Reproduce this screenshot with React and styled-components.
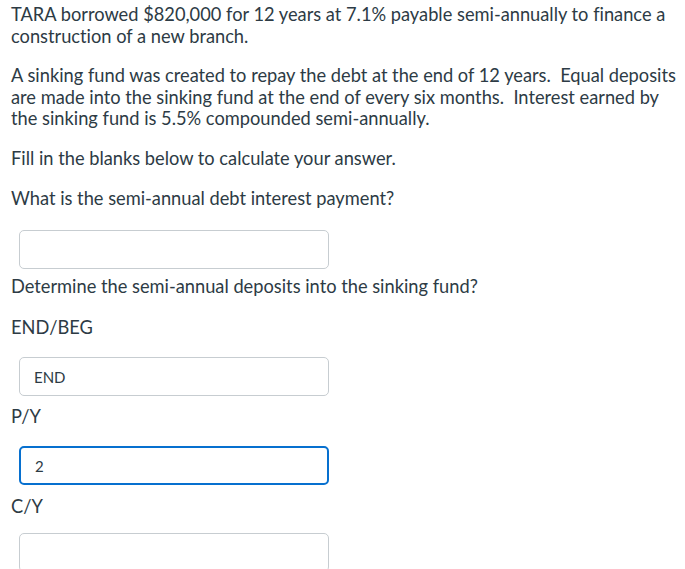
import React from "react";
import styled, { createGlobalStyle } from "styled-components";

const GlobalStyle = createGlobalStyle`
  body {
    margin: 0;
    background: #fff;
    font-family: Lato, "Helvetica Neue", Arial, sans-serif;
    color: #2d3b45;
  }
`;

const Page = styled.div`
  padding: 4px 4px 0 11px;
  font-size: 18.25px;
  line-height: 21.5px;
  font-variant-ligatures: none;
`;

const Para = styled.p`
  margin: 0 0 18px 0;
`;

const Label = styled.div`
  margin: ${p => p.top || 0}px 0 0 0;
  line-height: 22px;
`;

const Field = styled.input`
  display: block;
  box-sizing: border-box;
  width: 310px;
  height: 39px;
  margin: ${p => p.top}px 0 0 8px;
  padding: 0 14px;
  border: ${p => (p.focused ? "2px solid #0770cf" : "1px solid #c7cdd1")};
  border-radius: 5px;
  font-family: Lato, "Helvetica Neue", Arial, sans-serif;
  font-size: 15px;
  color: #2d3b45;
  background: #fff;
  outline: none;
`;

const App = () => (
  <>
    <GlobalStyle />
    <Page>
      <Para>
        TARA borrowed $820,000 for 12 years at 7.1% payable semi-annually to finance a
        construction of a new branch.
      </Para>
      <Para>
        A sinking fund was created to repay the debt at the end of 12 years.&nbsp; Equal deposits
        are made into the sinking fund at the end of every six months.&nbsp; Interest earned by
        the sinking fund is 5.5% compounded semi-annually.
      </Para>
      <Para>Fill in the blanks below to calculate your answer.</Para>
      <Label>What is the semi-annual debt interest payment?</Label>
      <Field top={21} defaultValue="" />
      <Label top={6}>Determine the semi-annual deposits into the sinking fund?</Label>
      <Label top={19}>END/BEG</Label>
      <Field top={19} defaultValue="END" />
      <Label top={9}>P/Y</Label>
      <Field top={19} focused defaultValue="2" />
      <Label top={10}>C/Y</Label>
      <Field top={16} defaultValue="" />
    </Page>
  </>
);

export default App;
